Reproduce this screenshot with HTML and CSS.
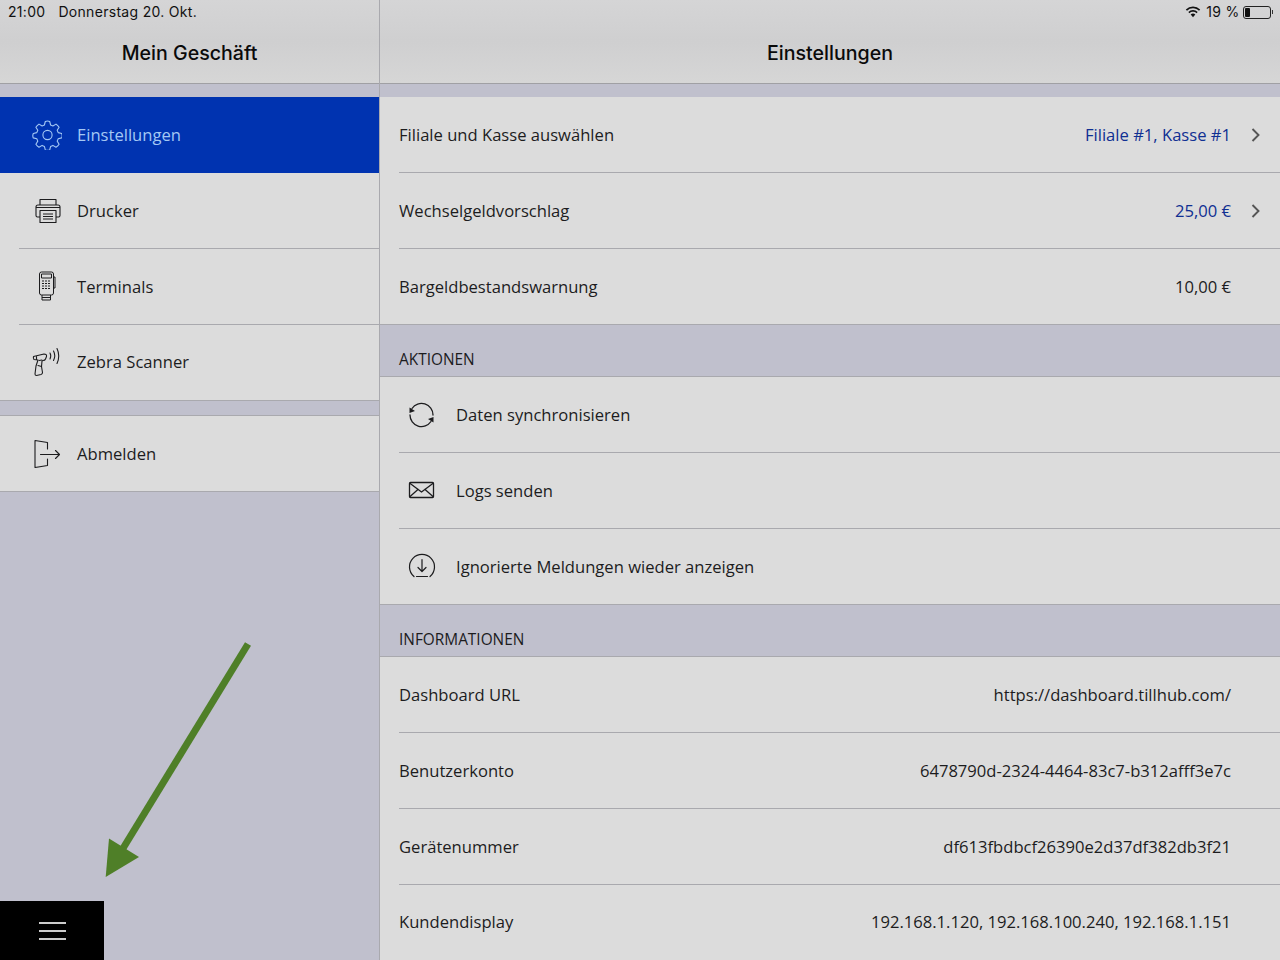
FILE: index.html
```html
<!DOCTYPE html>
<html lang="de">
<head>
<meta charset="utf-8">
<title>Einstellungen</title>
<link rel="stylesheet" href="styles.css">
</head>
<body>
<div class="app">
  <aside class="sidebar">
    <header class="navbar">
      <div class="status"><span class="time">21:00</span><span>Donnerstag 20. Okt.</span></div>
      <h1 class="title">Mein Geschäft</h1>
    </header>
    <div class="spacer"></div>
    <ul class="list">
      <li class="side-row active">
        <svg class="side-icon" viewBox="-0.500 0 30 30" fill="none" stroke="currentColor" stroke-width="1.100" stroke-linejoin="round"><path d="M12.800 1.500q2.200-1 4.400 0l.9 3.500 2.300 1 3.100-1.900q2 1.400 3.100 3.100l-1.900 3.100 1 2.300 3.500.9q1 2.200 0 4.400l-3.500.9-1 2.300 1.900 3.100q-1.100 1.700-3.100 3.100l-3.100-1.900-2.300 1-.9 3.500q-2.200 1-4.400 0l-.9-3.500-2.300-1-3.100 1.900q-2-1.400-3.100-3.100l1.900-3.100-1-2.300-3.500-.9q-1-2.200 0-4.400l3.500-.9 1-2.300-1.900-3.100q1.100-1.700 3.100-3.100l3.100 1.900 2.300-1z"/><circle cx="15" cy="15" r="4.600"/></svg>
        <span>Einstellungen</span>
      </li>
      <li class="side-row">
        <svg class="side-icon" viewBox="-1 -1 30 30" fill="none" stroke="currentColor" stroke-width="1.100" stroke-linejoin="round"><path d="M7 9V3.500h16V9"/><path d="M7 21H4.500Q3 21 3 19.500V11q0-2 2-2h20q2 0 2 2v8.500q0 1.500-1.500 1.500H23"/><path d="M7 14.500h16V26.500H7z"/><path d="M3 11.500h24M10 18h10M10 20.500h10M10 23h10"/></svg>
        <span>Drucker</span>
      </li>
      <li class="side-row sep">
        <svg class="side-icon" viewBox="1 0 30 30" fill="none" stroke="currentColor" stroke-width="1" stroke-linejoin="round"><rect x="8.500" y="1" width="14" height="23" rx="2"/><rect x="10.500" y="3" width="10" height="4"/><path d="M22.500 6h1.500v11h-1.500M11 24v5h8.500v-5M11 26.500h8.500"/><path d="M11 10h8M11 12.500h8M11 15h8M11 17.500h8" stroke-dasharray="2 1"/></svg>
        <span>Terminals</span>
      </li>
      <li class="side-row sep">
        <svg class="side-icon" viewBox="0 -0.500 30 30" fill="none" stroke="currentColor" stroke-width="1.100" stroke-linejoin="round" stroke-linecap="round"><path d="M1.500 9 12 6.500q3 0 2.500 2.500l-1 2.500q-.5 1.500-2.500 1.500l-1 .5L9.500 19l1 6q0 1.500-1.500 2L4.500 28q-1.500 0-1.500-1.500l1-8L6 12.500l-4-.5q-1-1-.5-3z"/><path d="M4.500 9v3M7 13l3-.5M6 18l3.500 1"/><path d="M18 5.500q1.500 2.500 0 6M21.500 3.500q2.500 4.500 0 9.500M25 1q3.500 7.500 0 15"/></svg>
        <span>Zebra Scanner</span>
      </li>
    </ul>
    <div class="gap"></div>
    <ul class="list">
      <li class="side-row">
        <svg class="side-icon" viewBox="1 -1 30 30" fill="none" stroke="currentColor" stroke-width="1.100" stroke-linecap="round" stroke-linejoin="round"><path d="M16.500 10V3.500L4 1.500 4 28.500 16.500 26.500V20"/><path d="M9.500 15.500h19M24.500 11.500l4 4-4 4"/></svg>
        <span>Abmelden</span>
      </li>
    </ul>
  </aside>
  <main class="content">
    <header class="navbar">
      <div class="status status-right">
        <svg class="wifi" viewBox="0 0 16 12" fill="currentColor"><path d="M8 2.300c2.300 0 4.400.9 6 2.400l1.200-1.300A10.500 10.500 0 0 0 8 .5 10.500 10.500 0 0 0 .8 3.400L2 4.700a8.700 8.700 0 0 1 6-2.400z"/><path d="M8 5.800c1.300 0 2.500.5 3.500 1.400l1.200-1.300A6.800 6.800 0 0 0 8 4a6.800 6.800 0 0 0-4.700 1.900l1.200 1.300c1-.9 2.200-1.400 3.500-1.400z"/><path d="M8 7.600c-.9 0-1.700.3-2.300.9L8 11.200l2.300-2.700c-.6-.6-1.400-.9-2.300-.9z"/></svg>
        <span>19 %</span>
        <span class="battery"><span class="battery-level"></span></span>
        <span class="battery-tip"></span>
      </div>
      <h1 class="title">Einstellungen</h1>
    </header>
    <div class="spacer"></div>
    <ul class="list">
      <li class="row"><span>Filiale und Kasse auswählen</span><span class="value link">Filiale #1, Kasse #1</span><svg class="chev" viewBox="0 0 10 16" fill="none" stroke="currentColor" stroke-width="1.900"><path d="M1.500 2l6 6-6 6"/></svg></li>
      <li class="row sep"><span>Wechselgeldvorschlag</span><span class="value link">25,00 €</span><svg class="chev" viewBox="0 0 10 16" fill="none" stroke="currentColor" stroke-width="1.900"><path d="M1.500 2l6 6-6 6"/></svg></li>
      <li class="row sep"><span>Bargeldbestandswarnung</span><span class="value">10,00 €</span></li>
    </ul>
    <h2 class="section">AKTIONEN</h2>
    <ul class="list">
      <li class="row action">
        <svg class="act-icon" viewBox="0 0 28 28" fill="none" stroke="currentColor" stroke-width="1.300" stroke-linecap="round"><path d="M4 7.500A11.500 11.500 0 0 1 25 14"/><path d="M23 20.500A11.500 11.500 0 0 1 2 14"/><path d="M1.500 6.500 7 10l-5.500 2zM25.500 21.500 20 18l5.500-2z" fill="currentColor" stroke="none"/></svg>
        <span>Daten synchronisieren</span>
      </li>
      <li class="row action sep">
        <svg class="act-icon" viewBox="0 0 28 28" fill="none" stroke="currentColor" stroke-width="1.300" stroke-linejoin="round"><rect x="1.500" y="6.500" width="24" height="15" rx="1"/><path d="M1.500 7 13.500 16 25.500 7M1.500 21l9-8M25.500 21l-9-8"/></svg>
        <span>Logs senden</span>
      </li>
      <li class="row action sep">
        <svg class="act-icon" viewBox="0 0 28 28" fill="none" stroke="currentColor" stroke-width="1.200" stroke-linecap="round" stroke-linejoin="round"><path d="M6 24.500A12.500 12.500 0 1 1 22 24.500"/><path d="M14 7.500v12M10 15.500l4 4 4-4M8.500 24.500h11"/></svg>
        <span>Ignorierte Meldungen wieder anzeigen</span>
      </li>
    </ul>
    <h2 class="section">INFORMATIONEN</h2>
    <ul class="list">
      <li class="row"><span>Dashboard URL</span><span class="value">https://dashboard.tillhub.com/</span></li>
      <li class="row sep"><span>Benutzerkonto</span><span class="value">6478790d-2324-4464-83c7-b312afff3e7c</span></li>
      <li class="row sep"><span>Gerätenummer</span><span class="value">df613fbdbcf26390e2d37df382db3f21</span></li>
      <li class="row sep"><span>Kundendisplay</span><span class="value">192.168.1.120, 192.168.100.240, 192.168.1.151</span></li>
    </ul>
  </main>
</div>
<button class="menu-btn" aria-label="Menü"><span></span><span></span><span></span></button>
<svg class="arrow" viewBox="0 0 160 240"><path d="M148 4 22 210" stroke="#4f7f28" stroke-width="7" fill="none"/><path d="M5.700 237 9 198.500 39 217z" fill="#4f7f28"/></svg>
</body>
</html>
```

FILE: styles.css
```css
* { box-sizing: border-box; }
html, body { margin: 0; padding: 0; }
body {
  width: 1280px;
  height: 960px;
  overflow: hidden;
  position: relative;
  background: #c0c0cd;
  font-family: "Open Sans", sans-serif;
  font-size: 16.600px;
  color: #1c1c1e;
}
ul { list-style: none; margin: 0; padding: 0; }
.app { display: flex; height: 960px; }
.sidebar { width: 380px; flex: none; border-right: 1px solid #a9a9ae; }
.content { flex: 1; min-width: 0; }
.navbar {
  height: 84px;
  background: linear-gradient(#d5d5d6, #cfcfd0 50%, #d6d6d6);
  border-bottom: 1px solid #a0a0a4;
  padding-top: 3px;
  display: flex;
  flex-direction: column;
}
.status {
  height: 18px;
  font-family: Inter, sans-serif;
  font-size: 14px;
  line-height: 18px;
  letter-spacing: .3px;
  padding-left: 8px;
  display: flex;
  gap: 13px;
  color: #111;
  white-space: nowrap;
}
.status-right { justify-content: flex-end; align-items: center; gap: 0; padding-right: 7px; }
.wifi { width: 16px; height: 12px; margin-right: 5px; }
.battery {
  width: 28px;
  height: 13px;
  margin-left: 3px;
  border: 1px solid #222;
  border-radius: 3px;
  padding: 1px;
  display: flex;
}
.battery-level { width: 5px; background: #111; border-radius: 1px; }
.battery-tip { width: 1.500px; height: 4px; background: #333; margin-left: 1px; }
.title {
  margin: 0;
  padding-top: 17px;
  text-align: center;
  font-family: Inter, sans-serif;
  font-size: 19.600px;
  line-height: 30px;
  font-weight: 500;
  color: #0a0a0a;
}
.spacer { height: 13px; }
.gap { height: 15px; border-bottom: 1px solid #a9a9ae; }
.list { background: #dcdcdc; border-bottom: 1px solid #a9a9ae; }
.side-row, .row { height: 75.670px; display: flex; align-items: center; position: relative; }
.side-row { padding-left: 32px; gap: 15px; }
.side-row.active { background: #0033b0; color: #a4c8f4; }
.side-icon { width: 30px; height: 30px; flex: none; }
.sep::before {
  content: "";
  position: absolute;
  top: -0.400px;
  left: 19px;
  right: 0;
  border-top: 1px solid #a9a9ae;
}
.row { padding: 0 49px 0 19px; justify-content: space-between; }
.value { margin-left: auto; }
.link { color: #0f2f92; }
.chev { position: absolute; right: 19px; top: 30px; width: 10px; height: 16px; color: #555; }
.action { justify-content: flex-start; gap: 20px; padding-left: 28px; }
.act-icon { width: 28px; height: 28px; flex: none; }
.section {
  margin: 0;
  height: 52px;
  padding: 24px 0 0 19px;
  font-size: 15.400px;
  line-height: 22px;
  font-weight: 400;
  color: #1c1c1e;
  border-bottom: 1px solid #a9a9ae;
}
.menu-btn {
  position: absolute;
  left: 0;
  bottom: 0;
  width: 104px;
  height: 59px;
  background: #000;
  border: 0;
  padding: 0;
  display: flex;
  flex-direction: column;
  align-items: center;
  justify-content: center;
  gap: 6px;
}
.menu-btn span { display: block; width: 27px; height: 2px; background: #ccc; }
.arrow { position: absolute; left: 100px; top: 640px; width: 160px; height: 240px; }
```
